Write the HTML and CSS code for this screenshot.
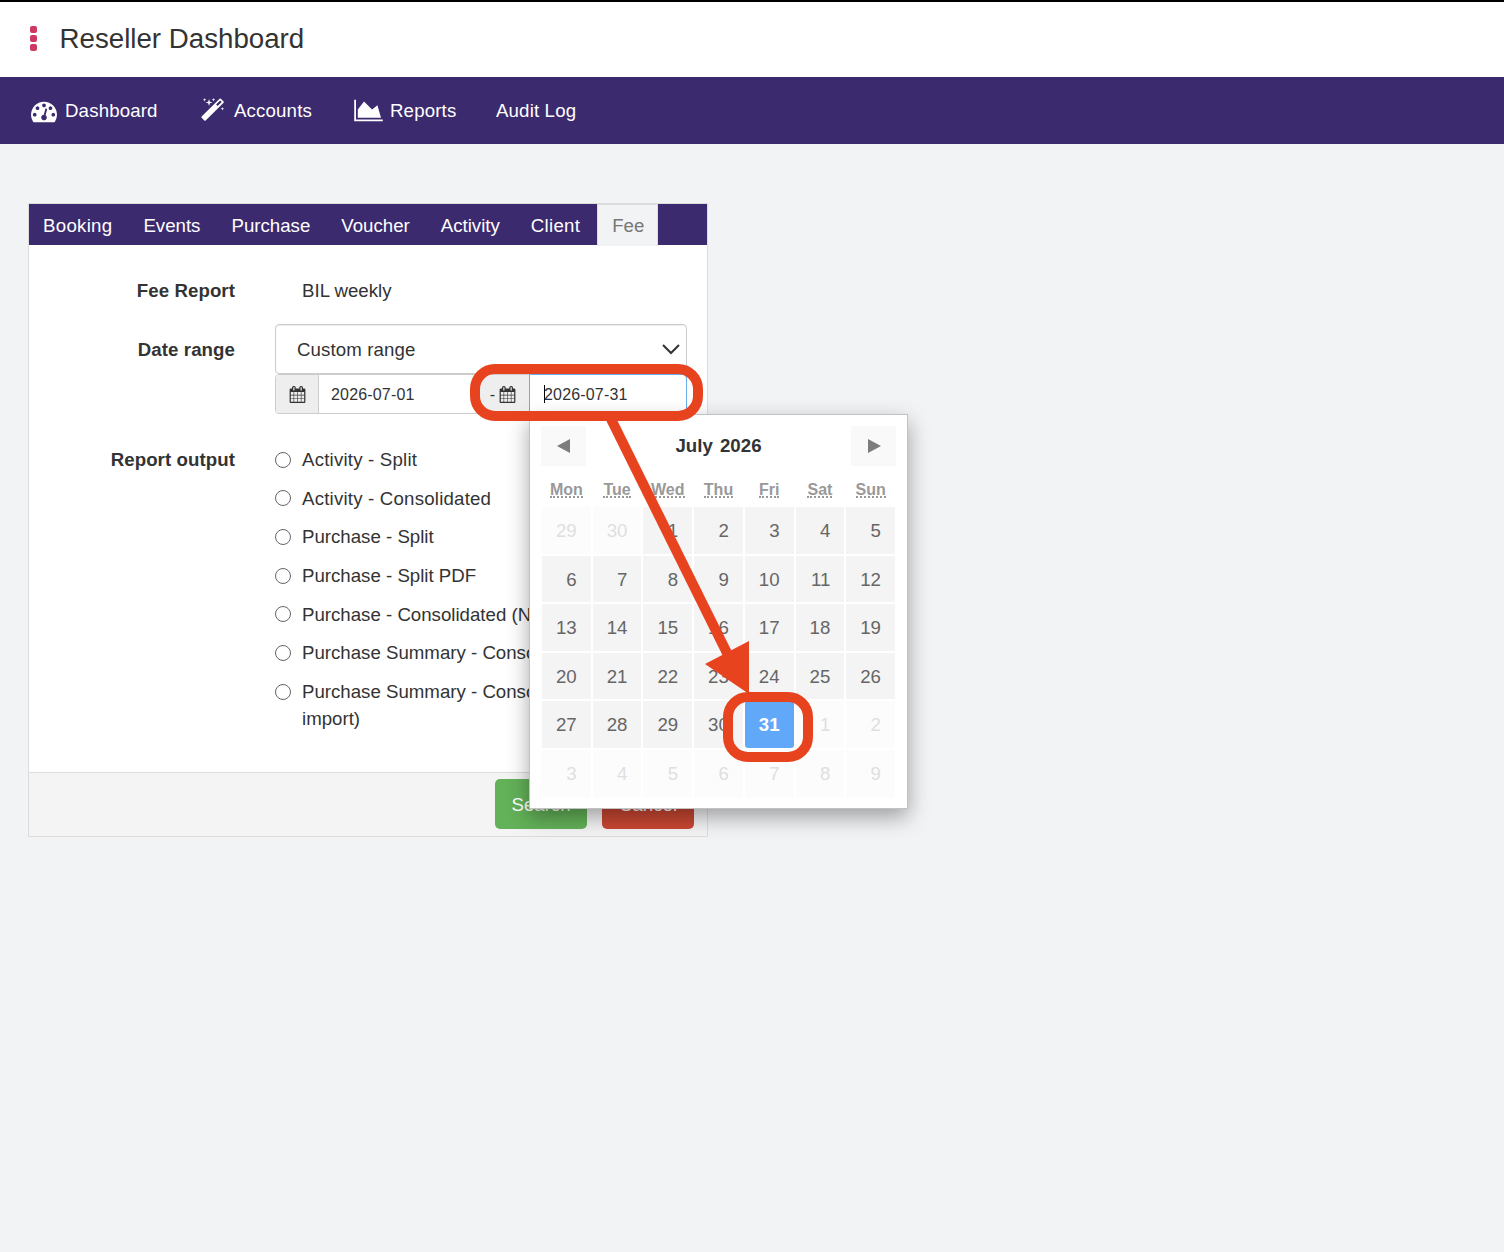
FILE: index.html
```html
<!DOCTYPE html>
<html lang="en">
<head>
    <meta charset="UTF-8">
    <meta name="viewport" content="width=device-width, initial-scale=1.0">
    <title>Reseller Dashboard</title>
    <link rel="stylesheet" href="styles.css">
</head>
<body>
    <svg class="sprite" aria-hidden="true">
        <symbol id="calendar" viewBox="0 0 1792 1792">
            <path d="M192 1664h288v-288h-288v288zm352 0h320v-288h-320v288zm-352-352h288v-320h-288v320zm352 0h320v-320h-320v320zm-352-384h288v-288h-288v288zm736 736h320v-288h-320v288zm-384-736h320v-288h-320v288zm768 736h288v-288h-288v288zm-384-352h320v-320h-320v320zm-352-864v-288q0-13-9.5-22.5t-22.5-9.5h-64q-13 0-22.5 9.5t-9.5 22.5v288q0 13 9.5 22.5t22.5 9.5h64q13 0 22.5-9.5t9.5-22.5zm736 864h288v-320h-288v320zm-384-384h320v-288h-320v288zm384 0h288v-288h-288v288zm32-480v-288q0-13-9.5-22.5t-22.5-9.5h-64q-13 0-22.5 9.5t-9.5 22.5v288q0 13 9.5 22.5t22.5 9.5h64q13 0 22.5-9.5t9.5-22.5zm384-64v1280q0 52-38 90t-90 38h-1408q-52 0-90-38t-38-90v-1280q0-52 38-90t90-38h128v-96q0-66 47-113t113-47h64q66 0 113 47t47 113v96h384v-96q0-66 47-113t113-47h64q66 0 113 47t47 113v96h128q52 0 90 38t38 90z"/>
        </symbol>
    </svg>

    <header class="page-header">
        <div class="dots"><span></span><span></span><span></span></div>
        <h1>Reseller Dashboard</h1>
    </header>

    <nav class="main-nav">
        <a class="nav-dashboard">
            <svg width="26" height="26" viewBox="0 0 1792 1792"><path d="M384 1152q0-53-37.5-90.5t-90.5-37.5-90.5 37.5-37.5 90.5 37.5 90.5 90.5 37.5 90.5-37.5 37.5-90.5zm192-448q0-53-37.5-90.5t-90.5-37.5-90.5 37.5-37.5 90.5 37.5 90.5 90.5 37.5 90.5-37.5 37.5-90.5zm428 481l101-382q6-26-7.5-48.5t-38.5-29.5-48 6.5-30 39.5l-101 382q-60 5-107 43.5t-63 98.5q-20 77 20 146t117 89 146-20 89-117q16-60-6-117t-72-91zm660-33q0-53-37.5-90.5t-90.5-37.5-90.5 37.5-37.5 90.5 37.5 90.5 90.5 37.5 90.5-37.5 37.5-90.5zm-640-640q0-53-37.5-90.5t-90.5-37.5-90.5 37.5-37.5 90.5 37.5 90.5 90.5 37.5 90.5-37.5 37.5-90.5zm448 192q0-53-37.5-90.5t-90.5-37.5-90.5 37.5-37.5 90.5 37.5 90.5 90.5 37.5 90.5-37.5 37.5-90.5zm320 448q0 261-141 483-19 29-54 29h-1402q-35 0-54-29-141-221-141-483 0-182 71-348t191-286 286-191 348-71 348 71 286 191 191 286 71 348z"/></svg>
            <span>Dashboard</span>
        </a>
        <a class="nav-accounts">
            <svg width="25" height="25" viewBox="0 0 1792 1792"><path d="M1190 581l293-293-107-107-293 293zm447-293q0 27-18 45l-1286 1286q-18 18-45 18t-45-18l-198-198q-18-18-18-45t18-45l1286-1286q18-18 45-18t45 18l198 198q18 18 18 45zm-1351-190l98 30-98 30-30 98-30-98-98-30 98-30 30-98zm350 162l196 60-196 60-60 196-60-196-196-60 196-60 60-196zm930 478l98 30-98 30-30 98-30-98-98-30 98-30 30-98zm-640-640l98 30-98 30-30 98-30-98-98-30 98-30 30-98z"/></svg>
            <span>Accounts</span>
        </a>
        <a class="nav-reports">
            <svg width="29" height="25" viewBox="0 0 2048 1792"><path d="M2048 1536v128h-2048v-1536h128v1408h1920zm-384-1024l256 896h-1664v-576l448-576 576 576z"/></svg>
            <span>Reports</span>
        </a>
        <a><span>Audit Log</span></a>
    </nav>

    <main>
        <form class="panel">
            <ul class="tabs">
                <li class="wide">Booking</li>
                <li>Events</li>
                <li>Purchase</li>
                <li>Voucher</li>
                <li>Activity</li>
                <li class="wide">Client</li>
                <li class="active">Fee</li>
            </ul>

            <div class="panel-body">
                <div class="row row-report">
                    <label>Fee Report</label>
                    <div class="static">BIL weekly</div>
                </div>
                <div class="row row-dates">
                    <label>Date range</label>
                    <div class="controls">
                        <div class="select">
                            <span>Custom range</span>
                            <svg width="18" height="11" viewBox="0 0 18 11"><path d="M1 1l8 8 8-8"/></svg>
                        </div>
                        <div class="dates">
                            <span class="addon"><svg width="17" height="17"><use href="#calendar"/></svg></span>
                            <span class="date">2026-07-01</span>
                            <span class="addon addon-to">-<svg width="17" height="17"><use href="#calendar"/></svg></span>
                            <span class="date focused"><i class="caret"></i>2026-07-31</span>
                        </div>
                        <div class="datepicker">
                            <div class="picker-head">
                                <button type="button" aria-label="Previous month"><i class="prev"></i></button>
                                <strong>July 2026</strong>
                                <button type="button" aria-label="Next month"><i class="next"></i></button>
                            </div>
                            <div class="weekdays">
                                <abbr>Mon</abbr><abbr>Tue</abbr><abbr>Wed</abbr><abbr>Thu</abbr><abbr>Fri</abbr><abbr>Sat</abbr><abbr>Sun</abbr>
                            </div>
                            <div class="days">
                                <span class="off">29</span><span class="off">30</span><span>1</span><span>2</span><span>3</span><span>4</span><span>5</span>
                                <span>6</span><span>7</span><span>8</span><span>9</span><span>10</span><span>11</span><span>12</span>
                                <span>13</span><span>14</span><span>15</span><span>16</span><span>17</span><span>18</span><span>19</span>
                                <span>20</span><span>21</span><span>22</span><span>23</span><span>24</span><span>25</span><span>26</span>
                                <span>27</span><span>28</span><span>29</span><span>30</span><span class="selected">31</span><span class="off">1</span><span class="off">2</span>
                                <span class="off">3</span><span class="off">4</span><span class="off">5</span><span class="off">6</span><span class="off">7</span><span class="off">8</span><span class="off">9</span>
                            </div>
                        </div>
                    </div>
                </div>
                <div class="row row-output">
                    <label>Report output</label>
                    <ul class="options">
                        <li><i class="radio"></i><span>Activity - Split</span></li>
                        <li><i class="radio"></i><span>Activity - Consolidated</span></li>
                        <li><i class="radio"></i><span>Purchase - Split</span></li>
                        <li><i class="radio"></i><span>Purchase - Split PDF</span></li>
                        <li><i class="radio"></i><span>Purchase - Consolidated (New)</span></li>
                        <li><i class="radio"></i><span>Purchase Summary - Consolidated</span></li>
                        <li><i class="radio"></i><span>Purchase Summary - Consolidated<br>import)</span></li>
                    </ul>
                </div>
            </div>

            <div class="panel-footer">
                <button type="button" class="btn search">Search</button>
                <button type="button" class="btn cancel">Cancel</button>
            </div>
        </form>
    </main>

    <!-- Callout: end date field to selected day -->
    <svg class="callout" width="1504" height="1252" viewBox="0 0 1504 1252">
        <rect x="475" y="369" width="223" height="47" rx="20"/>
        <rect x="728" y="697" width="80" height="60" rx="20"/>
        <path class="line" d="M611 419L728 655"/>
        <path class="head" d="M705 664L749 641V694z"/>
    </svg>
</body>
</html>
```
FILE: styles.css
```css
* {
    box-sizing: border-box;
}
body {
    margin: 0;
    min-height: 1252px;
    background-color: #f2f3f5;
    color: #333;
    font-family: "Helvetica Neue", "Liberation Sans", Arial, sans-serif;
    font-size: 18.67px;
    line-height: 27px;
}
ul {
    list-style: none;
    margin: 0;
    padding: 0;
}
.sprite {
    display: none;
}

/* Header */
.page-header {
    display: flex;
    align-items: center;
    height: 77px;
    padding: 0 30px 2px;
    border-top: 2px solid #000;
    background-color: #fff;
}
.dots {
    display: flex;
    flex-direction: column;
    gap: 2px;
    width: 7px;
    margin-right: 22.5px;
}
.dots span {
    height: 7px;
    border-radius: 2px;
    background-color: #cd3a61;
}
h1 {
    margin: 0;
    font-size: 27.7px;
    font-weight: normal;
}

/* Navigation */
.main-nav {
    display: flex;
    height: 67px;
    padding-left: 31px;
    background-color: #3c2a6f;
    color: #fff;
    letter-spacing: .15px;
}
.main-nav a {
    display: flex;
    align-items: center;
}
.main-nav svg {
    fill: #fff;
}
.nav-dashboard {
    width: 170px;
    gap: 8px;
}
.nav-accounts {
    width: 153px;
    gap: 8px;
}
.nav-reports {
    width: 142px;
    gap: 7px;
}

/* Panel */
main {
    padding: 59px 28px 0;
}
.panel {
    width: 680px;
    height: 634px;
    display: flex;
    flex-direction: column;
    border: 1px solid #dcdcdc;
    background-color: #fff;
}
.tabs {
    display: flex;
    height: 41px;
    background-color: #3c2a6f;
    color: #fff;
}
.tabs li {
    height: 41px;
    padding: 0 17px 0 14px;
    line-height: 43px;
}
.tabs .wide {
    padding-right: 17px;
    letter-spacing: .28px;
}
.tabs .active {
    height: 42px;
    padding: 0 13px 0 14px;
    line-height: 41px;
    border: 1px solid #dcdcdc;
    border-bottom: none;
    background-color: #f2f3f5;
    color: #777;
}
.panel-body {
    flex: 1;
    padding-top: 32px;
}
.row {
    display: flex;
}
.row label {
    width: 206px;
    margin-right: 40px;
    text-align: right;
    font-weight: bold;
    letter-spacing: .08px;
}
.row-report {
    height: 47px;
}
.static {
    padding-left: 27px;
}
.row-dates {
    height: 122px;
}
.row-dates label {
    padding-top: 12px;
}
.controls {
    position: relative;
    width: 412px;
}
.select {
    display: flex;
    align-items: center;
    justify-content: space-between;
    height: 50px;
    padding: 0 6px 0 21px;
    border: 1px solid #ccc;
    border-radius: 4px;
    box-shadow: inset 0 1px 1px rgba(0, 0, 0, .08);
    letter-spacing: .1px;
}
.select svg {
    fill: none;
    stroke: #333;
    stroke-width: 2;
}
.dates {
    display: flex;
    height: 40px;
    border: 1px solid #ccc;
    border-radius: 4px;
    font-size: 16px;
    letter-spacing: .17px;
    line-height: 39px;
}
.addon {
    display: flex;
    align-items: center;
    justify-content: center;
    width: 43px;
    border-right: 1px solid #ccc;
    border-radius: 3px 0 0 3px;
    background-color: #eee;
}
.addon svg {
    fill: #333;
}
.addon-to {
    width: 55px;
    gap: 4px;
    padding-left: 1px;
    border-right: none;
    border-radius: 0;
}
.date {
    width: 156px;
    padding-left: 12px;
}
.focused {
    width: 158px;
    margin: -1px;
    padding: 0 0 0 14px;
    border: 1px solid #66afe9;
    border-radius: 0 4px 4px 0;
}
.caret {
    display: inline-block;
    width: 1px;
    height: 18px;
    margin-right: -1px;
    vertical-align: -3px;
    background-color: #000;
}

/* Report output */
.options li {
    display: flex;
    margin-bottom: 11.7px;
}
.options span {
    white-space: nowrap;
}
.options li:nth-child(-n+2) span {
    letter-spacing: .2px;
}
.radio {
    width: 16px;
    height: 16px;
    margin: 5.5px 11px 0 0;
    border: 1px solid #666;
    border-radius: 50%;
}
.panel-footer {
    display: flex;
    justify-content: flex-end;
    gap: 15px;
    height: 64px;
    padding: 6px 13px;
    border-top: 1px solid #dcdcdc;
    background-color: #f4f4f4;
}
.btn {
    width: 92px;
    height: 50px;
    padding: 0;
    border: none;
    border-radius: 5px;
    color: #fff;
    font: inherit;
}
.search {
    background-color: #63b158;
}
.cancel {
    background-color: #c94733;
}

/* Datepicker */
.datepicker {
    position: absolute;
    z-index: 2;
    top: 90px;
    left: 254px;
    width: 379px;
    height: 395px;
    padding: 11px;
    border: 1px solid #c2c2c2;
    background-color: #fff;
    box-shadow: 0 8px 20px rgba(0, 0, 0, .35);
}
.picker-head {
    display: flex;
    justify-content: space-between;
    height: 40px;
    line-height: 39px;
    word-spacing: 2px;
}
.picker-head button {
    display: flex;
    align-items: center;
    justify-content: center;
    width: 45px;
    height: 40px;
    padding: 0;
    border: none;
    background-color: #f9f9f9;
}
.prev, .next {
    border: 7px solid transparent;
}
.prev {
    border-left: none;
    border-right: 13px solid #7d7d7d;
}
.next {
    margin-left: 2px;
    border-right: none;
    border-left: 13px solid #7d7d7d;
}
.weekdays, .days {
    display: grid;
    grid-template-columns: repeat(7, 1fr);
    column-gap: 2px;
    padding: 0 1px;
}
.weekdays {
    height: 41px;
    padding-top: 15px;
    font-size: 16px;
    font-weight: bold;
    line-height: 17px;
    color: #999;
}
.weekdays abbr {
    justify-self: center;
    height: 17px;
    border-bottom: 2px dotted #999;
}
.days {
    grid-auto-rows: 46.6px;
    row-gap: 2px;
    color: #666;
}
.days span {
    padding-right: 14px;
    background-color: #f4f4f4;
    line-height: 47px;
    text-align: right;
}
.days .off {
    background-color: #fcfcfc;
    color: #dfdfdf;
}
.days .selected {
    border-radius: 3px;
    background-color: #62a8f8;
    color: #fff;
    font-weight: bold;
}

.callout {
    position: absolute;
    z-index: 3;
    top: 0;
    left: 0;
    fill: none;
    stroke: #e8431f;
    stroke-width: 10;
    pointer-events: none;
}
.callout .head {
    fill: #e8431f;
    stroke: none;
}
```
